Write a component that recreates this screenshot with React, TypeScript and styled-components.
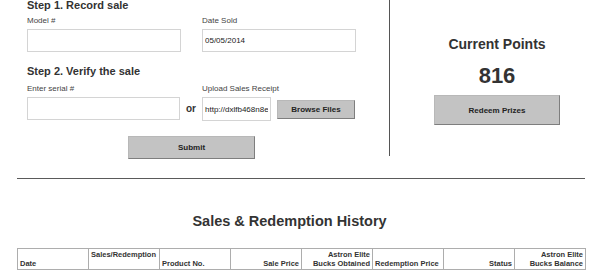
import styled, { createGlobalStyle } from 'styled-components';

const GlobalStyle = createGlobalStyle`
  html, body {
    margin: 0;
    padding: 0;
    background: #fff;
  }
  body {
    font-family: "Liberation Sans", Arial, Helvetica, sans-serif;
    color: #333;
  }
`;

const columns = [
  { top: '', bottom: 'Date', align: 'left' },
  { top: 'Sales/Redemption', bottom: '', align: 'left' },
  { top: '', bottom: 'Product No.', align: 'left' },
  { top: '', bottom: 'Sale Price', align: 'right' },
  { top: 'Astron Elite', bottom: 'Bucks Obtained', align: 'right' },
  { top: '', bottom: 'Redemption Price', align: 'left' },
  { top: '', bottom: 'Status', align: 'right' },
  { top: 'Astron Elite', bottom: 'Bucks Balance', align: 'right' },
];

export default () => {
  return (
    <Page>
      <GlobalStyle />
      <TopRow>
        <SaleForm>
          <StepTitle>Step 1. Record sale</StepTitle>
          <FieldGrid $gap={4}>
            <Field>
              <Label>Model #</Label>
              <TextInput $width={154} />
            </Field>
            <Field>
              <Label>Date Sold</Label>
              <TextInput $width={154} defaultValue="05/05/2014" />
            </Field>
          </FieldGrid>

          <StepTitle $gap={13}>Step 2. Verify the sale</StepTitle>
          <FieldGrid $gap={6}>
            <Field>
              <Label>Enter serial #</Label>
              <InlineGroup>
                <TextInput $width={153} />
                <Or>or</Or>
              </InlineGroup>
            </Field>
            <Field>
              <Label>Upload Sales Receipt</Label>
              <InlineGroup>
                <TextInput $width={69} $height={24} defaultValue="http://dxlfb468n8ek" />
                <GrayButton $width={78} $height={19}>
                  Browse Files
                </GrayButton>
              </InlineGroup>
            </Field>
          </FieldGrid>

          <SubmitRow>
            <GrayButton $width={127} $height={23}>
              Submit
            </GrayButton>
          </SubmitRow>
        </SaleForm>

        <PointsPanel>
          <PointsTitle>Current Points</PointsTitle>
          <PointsValue>816</PointsValue>
          <GrayButton $width={126} $height={30}>
            Redeem Prizes
          </GrayButton>
        </PointsPanel>
      </TopRow>

      <Divider />

      <HistoryTitle>Sales &amp; Redemption History</HistoryTitle>
      <HistoryTable>
        <thead>
          <tr>
            {columns.map((col, i) => (
              <HeadCell key={i} $align={col.align} $top={!col.bottom}>
                {col.top}
                {col.top && col.bottom ? <br /> : null}
                {col.bottom}
              </HeadCell>
            ))}
          </tr>
        </thead>
        <tbody />
      </HistoryTable>
    </Page>
  );
};

const Page = styled.div`
  width: 604px;
  margin-top: -1px;
`;

const TopRow = styled.div`
  display: flex;
  align-items: flex-start;
`;

const SaleForm = styled.div`
  width: 389px;
  box-sizing: border-box;
  padding-left: 27px;
`;

const StepTitle = styled.h2<{ $gap?: number }>`
  margin: ${(p) => p.$gap || 0}px 0 0;
  font-size: 11px;
  line-height: 13px;
  font-weight: bold;
  color: #333;
`;

const FieldGrid = styled.div<{ $gap: number }>`
  display: grid;
  grid-template-columns: 175px 154px;
  align-items: start;
  margin-top: ${(p) => p.$gap}px;
`;

const Field = styled.div`
  display: flex;
  flex-direction: column;
`;

const Label = styled.label`
  margin-bottom: 3px;
  font-size: 8px;
  line-height: 10px;
  color: #444;
`;

const InlineGroup = styled.div`
  display: flex;
  align-items: center;
  gap: 6px;
`;

const TextInput = styled.input<{ $width: number; $height?: number }>`
  width: ${(p) => p.$width}px;
  height: ${(p) => p.$height || 23}px;
  box-sizing: border-box;
  margin: 0;
  padding: 0 2px;
  border: 1px solid #d4d4d4;
  border-radius: 0;
  font-family: "Liberation Sans", Arial, sans-serif;
  font-size: 8px;
  color: #222;
  background: #fff;
  outline: none;
`;

const Or = styled.span`
  font-size: 10px;
  font-weight: bold;
  color: #333;
`;

const GrayButton = styled.button<{ $width: number; $height: number }>`
  width: ${(p) => p.$width}px;
  height: ${(p) => p.$height}px;
  box-sizing: border-box;
  margin: 0;
  padding: 0;
  background: #c3c3c3;
  border: 1px solid #b8b8b8;
  border-right-color: #7e7e7e;
  border-bottom-color: #7e7e7e;
  border-radius: 0;
  font-family: "Liberation Sans", Arial, sans-serif;
  font-size: 8px;
  font-weight: bold;
  color: #222;
  cursor: pointer;
`;

const SubmitRow = styled.div`
  width: 329px;
  margin-top: 15px;
  display: flex;
  justify-content: center;
`;

const PointsPanel = styled.div`
  width: 215px;
  height: 157px;
  box-sizing: border-box;
  border-left: 1px solid #555;
  padding-top: 37px;
  display: flex;
  flex-direction: column;
  align-items: center;
`;

const PointsTitle = styled.div`
  font-size: 14px;
  line-height: 17px;
  font-weight: bold;
  color: #333;
`;

const PointsValue = styled.div`
  margin: 10px 0 6px;
  font-size: 22px;
  line-height: 26px;
  font-weight: bold;
  color: #333;
`;

const Divider = styled.div`
  margin: 19px 19px 0 17px;
  border-top: 1px solid #5a5a5a;
`;

const HistoryTitle = styled.h2`
  margin: 33px 0 0;
  padding-right: 25px;
  text-align: center;
  font-size: 14.5px;
  line-height: 18px;
  font-weight: bold;
  color: #333;
`;

const HistoryTable = styled.table`
  margin: 18px 0 0 17px;
  width: 569px;
  table-layout: fixed;
  border-collapse: collapse;
  border: 1px solid #adadad;
`;

const HeadCell = styled.th<{ $align: string; $top: boolean }>`
  padding: 1px 2px;
  border: 1px solid #adadad;
  font-size: 7.5px;
  line-height: 9px;
  font-weight: bold;
  color: #333;
  text-align: ${(p) => p.$align};
  vertical-align: ${(p) => (p.$top ? 'top' : 'bottom')};
  white-space: nowrap;
`;
